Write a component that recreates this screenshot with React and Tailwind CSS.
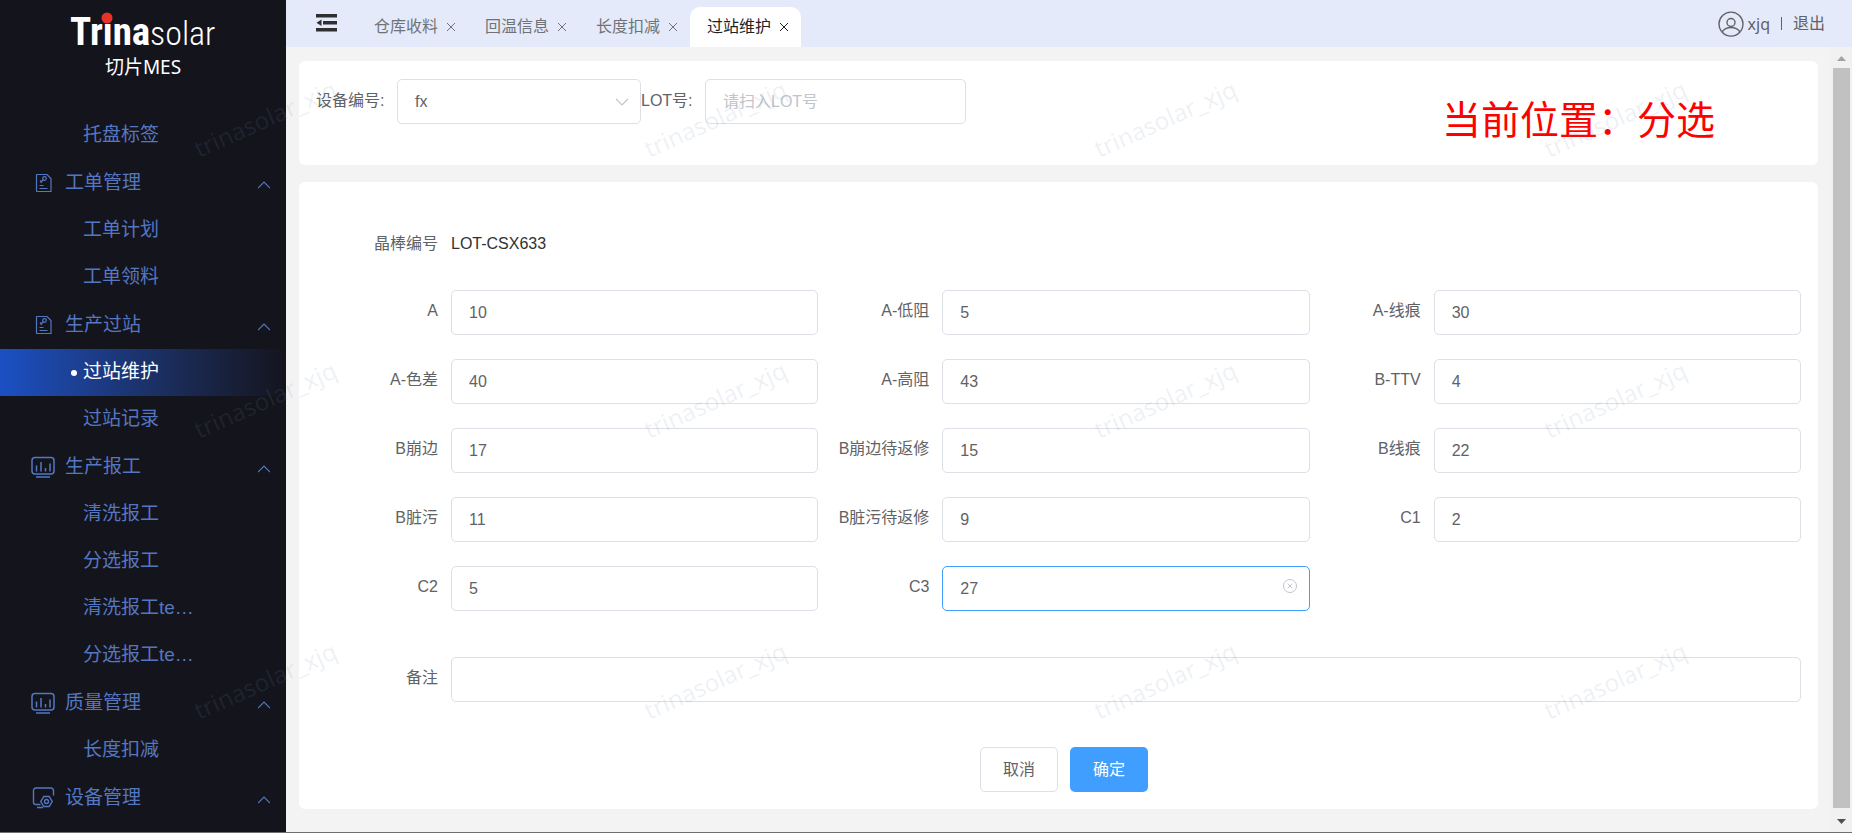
import React, { useState } from 'react';
import clsx from 'clsx';

const menu = [
  { label: '托盘标签' },
  { label: '工单管理', icon: 'doc', group: true },
  { label: '工单计划' },
  { label: '工单领料' },
  { label: '生产过站', icon: 'doc', group: true },
  { label: '过站维护', active: true },
  { label: '过站记录' },
  { label: '生产报工', icon: 'chart', group: true },
  { label: '清洗报工' },
  { label: '分选报工' },
  { label: '清洗报工te…' },
  { label: '分选报工te…' },
  { label: '质量管理', icon: 'chart', group: true },
  { label: '长度扣减' },
  { label: '设备管理', icon: 'device', group: true },
];

const tabs = ['仓库收料', '回温信息', '长度扣减', '过站维护'];

const fields = [
  { label: 'A', value: '10' },
  { label: 'A-低阻', value: '5' },
  { label: 'A-线痕', value: '30' },
  { label: 'A-色差', value: '40' },
  { label: 'A-高阻', value: '43' },
  { label: 'B-TTV', value: '4' },
  { label: 'B崩边', value: '17' },
  { label: 'B崩边待返修', value: '15' },
  { label: 'B线痕', value: '22' },
  { label: 'B脏污', value: '11' },
  { label: 'B脏污待返修', value: '9' },
  { label: 'C1', value: '2' },
  { label: 'C2', value: '5' },
  { label: 'C3', value: '27', focused: true },
];

const MenuIcon = ({ name }) => {
  if (name === 'doc') {
    return (
      <svg className="w-6 h-6" viewBox="0 0 24 24" fill="none" stroke="currentColor" strokeWidth="1.2">
        <path d="M6 2.500h10l4 4v13H6a.5.5 0 0 1-.5-.5V3a.5.5 0 0 1 .5-.5z" />
        <path d="M8.500 16.500h8M8.500 13.500h4M9.500 10.500l3-3M9 8.500l2 2" />
        <circle cx="13.500" cy="6.500" r="1.800" />
      </svg>
    );
  }
  if (name === 'chart') {
    return (
      <svg className="w-6 h-6" viewBox="0 0 24 24" fill="none" stroke="currentColor" strokeWidth="1.5">
        <rect x="1" y="1.500" width="22" height="16.500" rx="3" />
        <path d="M5.500 9.500v6M10 6v9.500M14.500 12v3.500M19 7.500v8M5 21h14" />
      </svg>
    );
  }
  return (
    <svg className="w-6 h-6" viewBox="0 0 24 24" fill="none" stroke="currentColor" strokeWidth="1.4">
      <path d="M9.500 17.500H5A2.500 2.500 0 0 1 2.500 15V3.500A2.500 2.500 0 0 1 5 1h15a2.500 2.500 0 0 1 2.500 2.500v5M6 20.500h6" />
      <path d="M12.800 9.500h5.400l3 5-3 5h-5.400l-3-5z" />
      <circle cx="15.500" cy="14.500" r="2" />
    </svg>
  );
};

const Close = ({ className }) => (
  <svg className={className} viewBox="0 0 10 10" fill="none" stroke="currentColor" strokeWidth="1">
    <path d="M1 1l8 8M9 1l-8 8" />
  </svg>
);

const Sidebar = () => (
  <aside className="w-[286px] shrink-0 bg-[#14141d] text-[#5477c2]">
    <div className="h-28 pt-1 flex flex-col items-center">
      <svg className="w-[148px] h-12" viewBox="0 0 148 48" role="img" aria-label="Trinasolar">
        <text x="1" y="41" fill="#fff" fontSize="39" fontWeight="700" fontFamily="'Roboto Condensed', Roboto, sans-serif">Trina</text>
        <text x="81" y="41" fill="#fff" fontSize="34" fontWeight="300" fontFamily="'Roboto Condensed', Roboto, sans-serif">solar</text>
        <circle cx="38" cy="14" r="5.500" fill="#e6332a" />
      </svg>
      <span className="font-['Noto_Sans','Noto_Sans_CJK_SC',sans-serif] text-[19px] leading-[30px] text-white">切片MES</span>
    </div>
    <nav>
      {menu.map((item) => (
        <a
          key={item.label}
          href="#"
          className={clsx(
            'relative flex items-center h-[47px] text-[19px]',
            item.group ? 'mt-px pl-[31px] pr-4' : 'pl-[83px]',
            item.active && 'bg-linear-to-r from-[#1b50c4] to-[#14141d] text-white'
          )}
        >
          {item.active && <span className="absolute left-[71px] w-1.5 h-1.5 rounded-full bg-white" />}
          {item.icon && (
            <span className="w-[34px] shrink-0">
              <MenuIcon name={item.icon} />
            </span>
          )}
          <span>{item.label}</span>
          {item.group && (
            <svg className="ml-auto w-3 h-3" viewBox="0 0 12 12" fill="none" stroke="currentColor" strokeWidth="1.2">
              <path d="M0 10l6-6 6 6" />
            </svg>
          )}
        </a>
      ))}
    </nav>
  </aside>
);

const Header = () => (
  <header className="flex h-[47px] bg-[#e4eafa] text-base text-[#5f6266]">
    <button className="ml-[30px] mr-5 pb-0.5" aria-label="menu">
      <svg className="w-[21px] h-[18px]" viewBox="0 0 21 18" fill="#2f2f2f">
        <path d="M0 0h21v3.500H0zM7 7h14v3.500H7zM0 14h21v3.500H0zM5.500 5.500v6.500L.5 8.750z" />
      </svg>
    </button>
    <div className="flex items-end">
      {tabs.map((tab, i) => (
        <div
          key={tab}
          className={clsx(
            'flex items-center h-10 w-[111px] pl-[17px] gap-2 rounded-t-[10px]',
            i === 3 ? 'bg-white text-[#222]' : 'text-[#707276]'
          )}
        >
          <a href="#">{tab}</a>
          <button aria-label={`关闭${tab}`}>
            <Close className="w-2.5 h-2.5" />
          </button>
        </div>
      ))}
    </div>
    <div className="ml-auto mr-[27px] flex items-center">
      <svg className="w-[26px] h-[26px]" viewBox="0 0 26 26" fill="none" stroke="currentColor" strokeWidth="1.400">
        <path d="M3.500 20.500a12 12 0 1 1 19 0" />
        <circle cx="13" cy="11.500" r="4" />
        <path d="M4 21c4-6 14-6 18 0-5 5.500-13 5.500-18 0z" />
      </svg>
      <span className="ml-1 font-['Noto_Sans',sans-serif]">xjq</span>
      <span className="mx-[11px] w-px h-[13px] bg-[#5f6266]" />
      <button>退出</button>
    </div>
  </header>
);

const inputBase = 'w-full h-[45px] pl-[17px] rounded-[5px] border bg-white text-base text-[#606266] outline-none placeholder:text-[#c0c4cc]';

const QueryCard = () => (
  <section className="flex items-start bg-white rounded-md h-[104px] px-[17px] pt-[18px]">
    <label htmlFor="device" className="w-[81px] shrink-0 leading-[43px]">设备编号:</label>
    <div className="relative w-[244px] shrink-0">
      <select id="device" className={clsx(inputBase, 'appearance-none border-[#dcdfe6]')}>
        <option>fx</option>
      </select>
      <svg className="absolute right-3 top-4 w-3.5 h-3.5 pointer-events-none" viewBox="0 0 14 14" fill="none" stroke="#c0c4cc" strokeWidth="1.200">
        <path d="M1 4l6 6 6-6" />
      </svg>
    </div>
    <label htmlFor="lot" className="w-16 shrink-0 leading-[43px]">LOT号:</label>
    <div className="w-[261px] shrink-0">
      <input id="lot" placeholder="请扫入LOT号" className={clsx(inputBase, 'border-[#dcdfe6]')} />
    </div>
    <p className="ml-auto mr-[86px] text-[39px] leading-[84px] text-[#ff0000] whitespace-nowrap">当前位置：分选</p>
  </section>
);

const Field = ({ id, label, focused, value, onChange }) => (
  <div className="flex">
    <label htmlFor={id} className="w-[124px] shrink-0 pr-[13px] text-right leading-[41px]">{label}</label>
    <div className="relative flex-1">
      <input
        id={id}
        value={value}
        onChange={(e) => onChange(e.target.value)}
        className={clsx(inputBase, focused ? 'border-[#409eff]' : 'border-[#dcdfe6]')}
      />
      {focused && (
        <button className="absolute right-3 top-3 text-[#c0c4cc]" aria-label="清空">
          <svg className="w-4 h-4" viewBox="0 0 16 16" fill="none" stroke="currentColor">
            <circle cx="8" cy="8" r="6.500" />
            <path d="M5.700 5.700l4.600 4.600M10.300 5.700l-4.600 4.600" />
          </svg>
        </button>
      )}
    </div>
  </div>
);

const StationForm = () => {
  const [values, setValues] = useState(fields.map((f) => f.value));
  const [remark, setRemark] = useState('');

  const update = (index, value) => {
    setValues(values.map((v, i) => (i === index ? value : v)));
  };

  return (
    <form className="mt-[17px] bg-white rounded-md pt-[41px] pb-[17px] pl-7 pr-[17px]" onSubmit={(e) => e.preventDefault()}>
      <div className="flex leading-[41px] mb-[26px]">
        <span className="w-[124px] pr-[13px] text-right">晶棒编号</span>
        <span className="text-[#303133]">LOT-CSX633</span>
      </div>
      <div className="grid grid-cols-3 gap-y-6">
        {fields.map((f, i) => (
          <Field
            key={f.label}
            id={`field-${i}`}
            label={f.label}
            focused={f.focused}
            value={values[i]}
            onChange={(v) => update(i, v)}
          />
        ))}
      </div>
      <div className="mt-[46px]">
        <Field id="remark" label="备注" value={remark} onChange={setRemark} />
      </div>
      <div className="mt-[45px] flex justify-center gap-3">
        <button type="button" className="w-[78px] h-[45px] rounded-[5px] border border-[#dcdfe6] bg-white">取消</button>
        <button type="submit" className="w-[78px] h-[45px] rounded-[5px] bg-[#409eff] text-white">确定</button>
      </div>
    </form>
  );
};

const ScrollBar = () => (
  <div className="w-[21px] shrink-0 flex flex-col items-center bg-[#f1f1f1]">
    <svg className="w-[21px] h-[21px]" viewBox="0 0 21 21" fill="#a3a3a3">
      <path d="M6 14h9l-4.500-5z" />
    </svg>
    <div className="flex-1 w-[17px] bg-[#c1c1c1]" />
    <svg className="w-[21px] h-6" viewBox="0 0 21 24" fill="#505050">
      <path d="M6 11h9l-4.500 5z" />
    </svg>
  </div>
);

const Watermark = () => (
  <svg className="absolute inset-0 w-full h-full pointer-events-none" aria-hidden="true">
    {[158, 439, 720].map((y) =>
      [199, 649, 1099, 1549].map((x) => (
        <text
          key={`${x}-${y}`}
          x={x}
          y={y}
          transform={`rotate(-24 ${x} ${y})`}
          fontSize="24"
          fontFamily="'Noto Sans', sans-serif"
          fill="#6f8fb0"
          fillOpacity="0.12"
        >
          trinasolar_xjq
        </text>
      ))
    )}
  </svg>
);

export default function App() {
  return (
    <div className="relative flex min-h-screen overflow-hidden border-b border-[#6e6e6e] bg-[#f3f3f3] font-['Liberation_Sans','Noto_Sans_CJK_SC',sans-serif] text-base text-[#606266]">
      <Sidebar />
      <div className="flex-1 min-w-0 flex flex-col">
        <Header />
        <div className="flex-1 flex">
          <main className="flex-1 min-w-0 pt-3.5 px-[13px]">
            <QueryCard />
            <StationForm />
          </main>
          <ScrollBar />
        </div>
      </div>
      <Watermark />
    </div>
  );
}
